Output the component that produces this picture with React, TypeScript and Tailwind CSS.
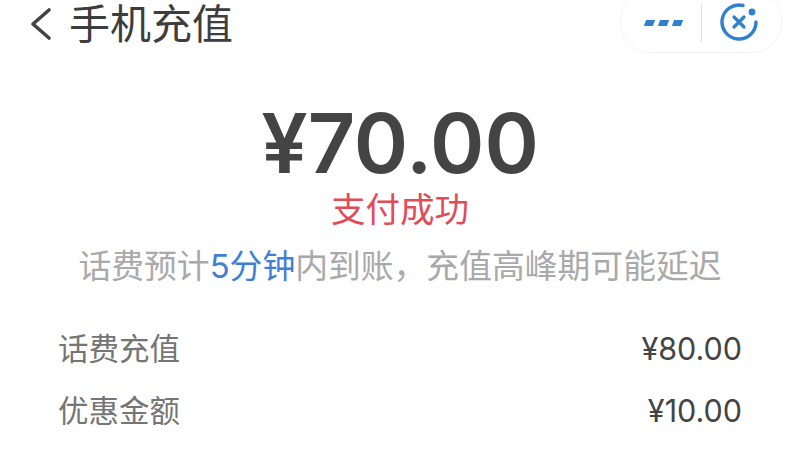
const fontStack = { fontFamily: '"Inter", "Noto Sans CJK SC", sans-serif' };

function Row({ label, value }: { label: string; value: string }) {
  return (
    <div className="flex h-[62px] items-center justify-between pl-[58px] pr-[58px]">
      <span className="text-[30.5px] leading-none text-[#757575]">{label}</span>
      <span className="text-[30.5px] leading-none text-[#444444]">{value}</span>
    </div>
  );
}

function MiniProgramPill() {
  return (
    <div className="-mt-[10px] flex h-[63px] w-[162px] items-center rounded-[30px] border border-[#f4f4f4] bg-white pt-[5px]">
      <div className="-mt-[3px] flex w-[80px] justify-center gap-[5px] pl-[5px]">
        <span className="h-[6px] w-[9px] -skew-x-[20deg] bg-[#2f80d0]" />
        <span className="h-[6px] w-[9px] -skew-x-[20deg] bg-[#2f80d0]" />
        <span className="h-[6px] w-[9px] -skew-x-[20deg] bg-[#2f80d0]" />
      </div>
      <div className="-mt-[3px] h-[38px] w-px bg-[#e2e2e2]" />
      <svg className="-mt-[4px] ml-[17px]" width="40" height="40" viewBox="0 0 40 40" fill="none">
        <path d="M24 3.5A17 17 0 1 0 37 20" stroke="#2f80d0" strokeWidth="3.4" strokeLinecap="round" />
        <circle cx="33" cy="10" r="3.4" fill="#2f80d0" />
        <path d="M15 15l10 10M25 15l-10 10" stroke="#2f80d0" strokeWidth="3.2" strokeLinecap="round" />
      </svg>
    </div>
  );
}

export default function App() {
  return (
    <div className="h-[463px] w-[800px] overflow-hidden bg-white" style={fontStack}>
      <header className="flex h-[54px] items-start justify-between pl-[29px] pr-[18px]">
        <div className="flex items-center">
          <svg className="-mt-[3px]" width="24" height="40" viewBox="0 0 24 40" fill="none">
            <path d="M20 7L4 21l16 14" stroke="#444444" strokeWidth="3.6" strokeLinecap="round" strokeLinejoin="round" />
          </svg>
          <h1 className="ml-[16px] text-[41px] font-normal leading-[48px] text-[#3d3d3d]">手机充值</h1>
        </div>
        <MiniProgramPill />
      </header>
      <main className="flex flex-col items-center">
        <div className="mt-[48px] text-[82.5px] font-semibold leading-none text-[#444444]">¥70.00</div>
        <div className="mt-[6px] text-[34.5px] leading-[38px] text-[#e24b58]">支付成功</div>
        <p className="mt-[15px] text-[32.8px] leading-[44px] text-[#a9a9a9]">
          话费预计<span className="text-[#3f7fd6]">5分钟</span>内到账，充值高峰期可能延迟
        </p>
      </main>
      <section className="mt-[31px]">
        <Row label="话费充值" value="¥80.00" />
        <Row label="优惠金额" value="¥10.00" />
      </section>
    </div>
  );
}
